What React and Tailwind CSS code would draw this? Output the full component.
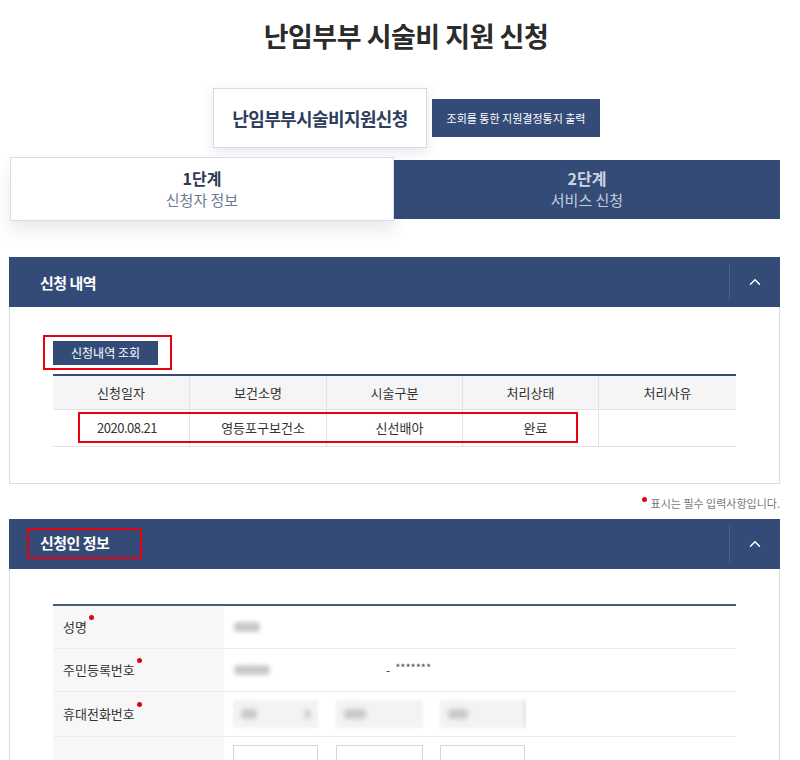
import { ChevronUp } from 'lucide-react'

const FONT = { fontFamily: '"Noto Sans CJK KR", "Noto Sans", sans-serif' }

const HISTORY_COLS = ['신청일자', '보건소명', '시술구분', '처리상태', '처리사유']
const HISTORY_ROW = ['2020.08.21', '영등포구보건소', '신선배아', '완료', '']

function Blur({ w, className = '' }) {
  return <span className={`inline-block h-[10px] rounded-sm bg-[#c9c9c9] blur-[2px] ${className}`} style={{ width: w }} />
}

function SectionHeader({ children }) {
  return (
    <div className="flex h-[50px] items-center bg-[#344b78]">
      <div className="flex-1 pl-[18px]">{children}</div>
      <div className="h-[36px] w-px bg-[#4a5f88]" />
      <div className="flex w-[50px] items-center justify-center">
        <ChevronUp className="h-[18px] w-[18px] text-white" strokeWidth={2} />
      </div>
    </div>
  )
}

function Req() {
  return <span className="ml-[2px] inline-block h-[5px] w-[5px] -translate-y-[9px] rounded-full bg-[#e60012]" />
}

export default function App() {
  return (
    <div className="w-[800px] bg-white text-[#333]" style={FONT}>
      {/* Title */}
      <h1 className="pl-[12px] pt-[16px] text-center text-[27px] font-bold leading-[40px] tracking-[-0.5px] text-[#2b2b2b]">
        난임부부 시술비 지원 신청
      </h1>

      {/* Tabs */}
      <div className="mt-[32px] flex items-center pl-[213px]">
        <div className="flex h-[60px] w-[214px] items-center justify-center border border-[#d5dbe6] bg-white shadow-[0_4px_12px_rgba(40,60,100,0.12)]">
          <span className="text-[18px] font-bold tracking-[-0.6px] text-[#2f3d5c]">난임부부시술비지원신청</span>
        </div>
        <div className="ml-[5px] flex h-[38px] w-[168px] items-center justify-center bg-[#344b78] text-[11px] text-white">
          조회를 통한 지원결정통지 출력
        </div>
      </div>

      {/* Steps */}
      <div className="mx-[10px] mt-[9px] flex w-[770px] items-center">
        <div className="relative z-10 flex h-[64px] w-[384px] flex-col items-center justify-center border border-[#d8dde6] bg-white shadow-[0_10px_14px_rgba(40,60,100,0.10)]">
          <span className="text-[16px] font-bold leading-[21px] text-[#2e3a55]">1단계</span>
          <span className="text-[15px] leading-[21px] text-[#6c7a93]">신청자 정보</span>
        </div>
        <div className="flex h-[59px] flex-1 flex-col items-center justify-center bg-[#344b78]">
          <span className="text-[16px] font-bold leading-[21px] text-[#cdd5e3]">2단계</span>
          <span className="text-[15px] leading-[21px] text-[#c2cbdb]">서비스 신청</span>
        </div>
      </div>

      {/* 신청 내역 */}
      <div className="mx-[9px] mt-[36px] w-[771px]">
        <SectionHeader>
          <span className="ml-[13px] text-[15px] font-bold tracking-[-0.5px] text-white">신청 내역</span>
        </SectionHeader>
        <div className="h-[177px] border border-t-0 border-[#dcdcdc] px-[43px] pt-[28px]">
          <div className="ml-[-10px] inline-block border-2 border-[#e60012] pb-[3px] pl-[8px] pr-[12px] pt-[4px]">
            <div className="flex h-[24px] w-[105px] items-center justify-center bg-[#344b78] text-[12px] text-white">
              신청내역 조회
            </div>
          </div>
          <div className="relative mt-[4px] w-[683px] border-t-2 border-[#344b78]">
            <div className="grid grid-cols-[136px_137px_136px_136px_138px] bg-[#f5f5f5]">
              {HISTORY_COLS.map((c, i) => (
                <div key={c} className={`flex h-[33px] items-center justify-center text-[13px] text-[#333] ${i > 0 ? 'border-l border-[#e3e3e3]' : ''}`}>
                  {c}
                </div>
              ))}
            </div>
            <div className="grid grid-cols-[136px_137px_136px_136px_138px] border-b border-t border-[#e3e3e3]">
              {HISTORY_ROW.map((c, i) => (
                <div key={i} className={`flex h-[36px] items-center justify-center text-[13px] text-[#333] ${i > 0 ? 'border-l border-[#e3e3e3]' : ''} ${i === 0 ? 'pl-[12px] tracking-[-0.5px]' : 'pl-[10px]'}`}>
                  {c}
                </div>
              ))}
            </div>
            <div className="absolute left-[25px] top-[36px] h-[31px] w-[500px] border-2 border-[#e60012]" />
          </div>
        </div>
      </div>

      {/* required note */}
      <div className="mr-[20px] mt-[11px] flex items-center justify-end text-[11px] text-[#777]">
        <span className="mr-[4px] inline-block h-[5px] w-[5px] -translate-y-[4px] rounded-full bg-[#e60012]" />
        표시는 필수 입력사항입니다.
      </div>

      {/* 신청인 정보 */}
      <div className="mx-[9px] mt-[7px] w-[771px]">
        <SectionHeader>
          <span className="inline-block border-2 border-[#e60012] py-[2px] pl-[11px] pr-[31px] text-[15px] font-bold tracking-[-0.5px] text-white">
            신청인 정보
          </span>
        </SectionHeader>
        <div className="h-[200px] border border-t-0 border-[#dcdcdc] px-[43px] pt-[35px]">
          <div className="w-[683px] border-t-2 border-[#4a5a7a]">
            <div className="grid grid-cols-[171px_1fr] border-b border-[#ececec]">
              <div className="flex h-[42px] items-center bg-[#f7f7f7] pl-[10px] text-[13px]">성명<Req /></div>
              <div className="flex items-center pl-[10px]"><Blur w={26} /></div>
            </div>
            <div className="grid grid-cols-[171px_1fr] border-b border-[#ececec]">
              <div className="flex h-[42px] items-center bg-[#f7f7f7] pl-[10px] text-[13px]">주민등록번호<Req /></div>
              <div className="flex items-center pl-[10px]">
                <Blur w={36} />
                <span className="ml-[116px] text-[12px] text-[#333]">-</span>
                <span className="ml-[5px] -translate-y-[2px] text-[11px] text-[#555]">*******</span>
              </div>
            </div>
            <div className="grid grid-cols-[171px_1fr] border-b border-[#ececec]">
              <div className="flex h-[44px] items-center bg-[#f7f7f7] pl-[10px] text-[13px]">휴대전화번호<Req /></div>
              <div className="flex items-center pl-[9px]">
                <div className="flex h-[28px] w-[85px] items-center justify-between bg-[#f3f3f3] px-[8px] blur-[1px]">
                  <Blur w={16} /><Blur w={5} />
                </div>
                <div className="ml-[18px] flex h-[28px] w-[87px] items-center bg-[#f3f3f3] px-[8px] blur-[1px]"><Blur w={22} /></div>
                <div className="ml-[17px] flex h-[28px] w-[85px] items-center border-r border-[#ccc] bg-[#f3f3f3] px-[8px] blur-[1px]"><Blur w={20} /></div>
              </div>
            </div>
            <div className="grid grid-cols-[171px_1fr]">
              <div className="h-[42px] bg-[#f7f7f7]" />
              <div className="flex items-start pl-[9px] pt-[8px]">
                <div className="h-[30px] w-[85px] border border-[#d5d5d5]" />
                <div className="ml-[18px] h-[30px] w-[87px] border border-[#d5d5d5]" />
                <div className="ml-[17px] h-[30px] w-[85px] border border-[#d5d5d5]" />
              </div>
            </div>
          </div>
        </div>
      </div>
    </div>
  )
}
